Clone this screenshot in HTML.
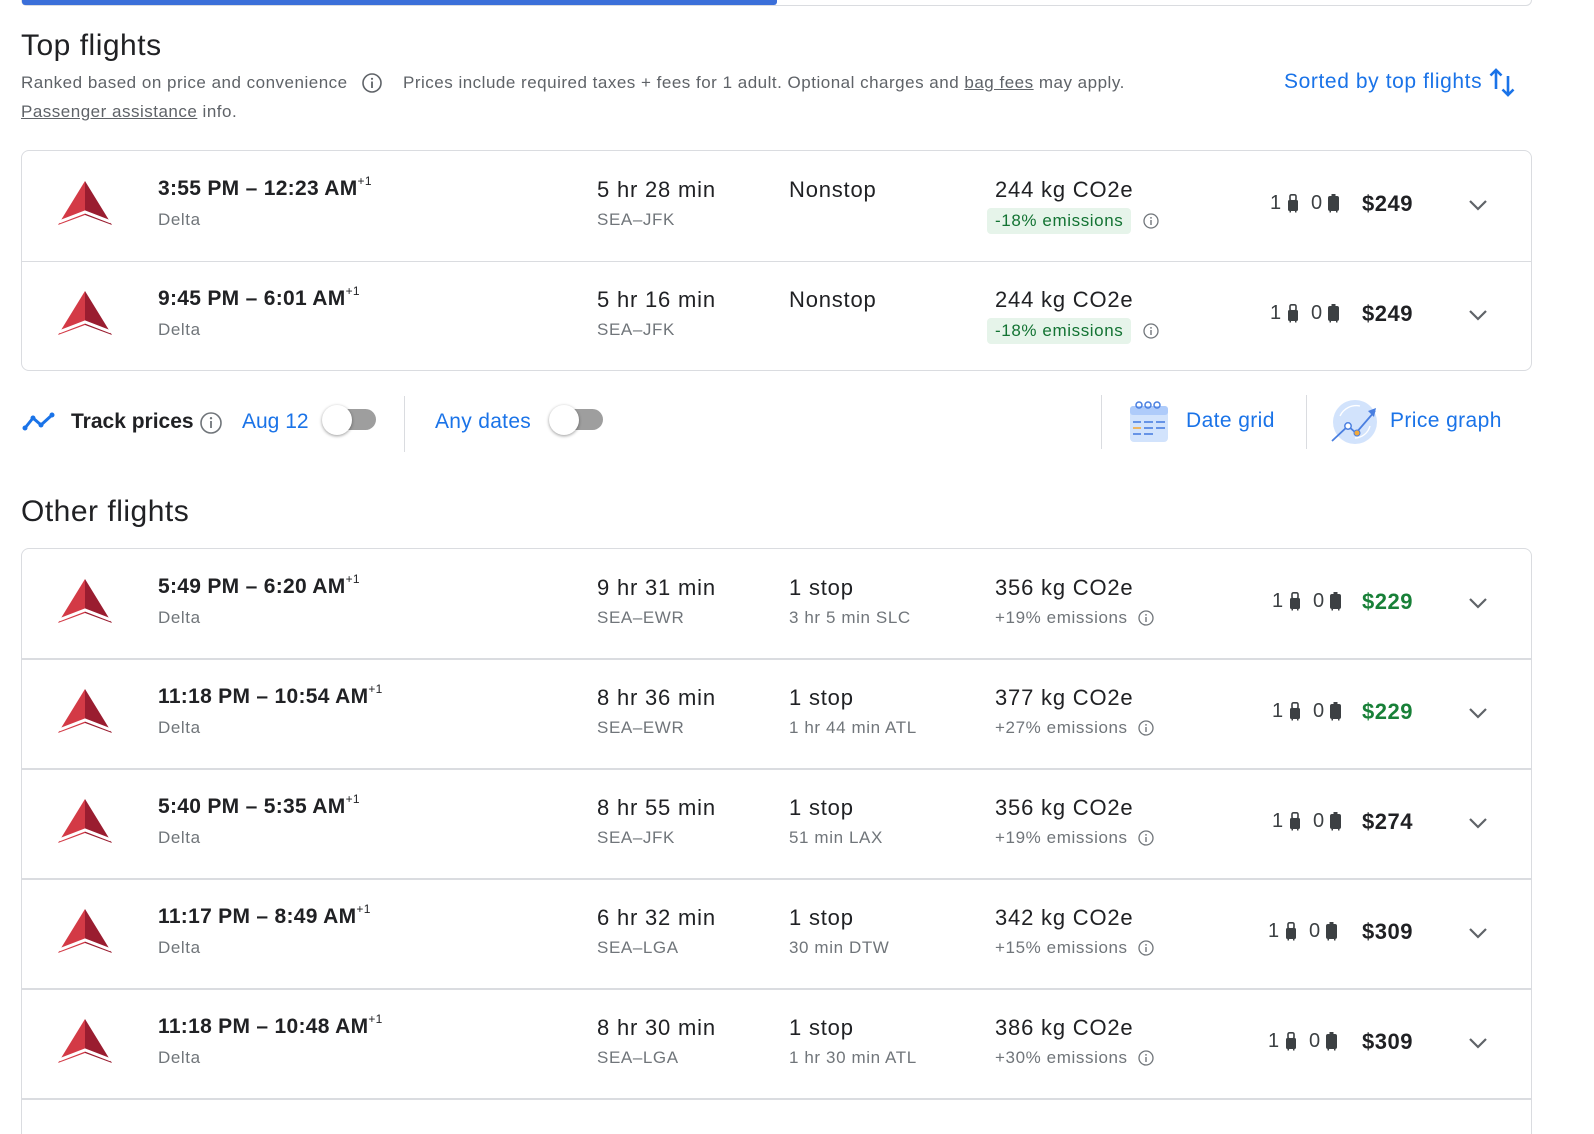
<!DOCTYPE html>
<html style="overflow:hidden;height:1134px"><head><meta charset="utf-8">
<style>
*{margin:0;padding:0;box-sizing:border-box}
html,body{width:1594px;height:1134px;overflow:hidden}
body{background:#fff;font-family:"Liberation Sans",Arial,sans-serif;color:#202124}
#w{position:relative;width:1594px;height:1134px;overflow:hidden}
.a{position:absolute;white-space:nowrap}
.card{position:absolute;left:21px;width:1511px;border:1px solid #dadce0;border-radius:8px;overflow:hidden}
.row{position:absolute;left:0;width:1509px;height:110px}
.sep{position:absolute;left:0;width:1509px;height:1px;background:#dadce0}
.sep2{position:absolute;left:0;width:1509px;height:2px;background:#dadce0}
.t{font-size:21px;font-weight:bold;color:#202124;top:26px;letter-spacing:.3px}
.t sup{font-size:12px;position:relative;top:-3px;vertical-align:top;font-weight:normal}
.s{font-size:17px;color:#70757a;top:59px;letter-spacing:.6px}
.m{font-size:22px;color:#202124;top:26px;letter-spacing:.8px}
.badge{top:57px;left:965px;height:26px;padding:0 8px;background:#e6f4ea;border-radius:4px;color:#137333;font-size:17px;line-height:26px;letter-spacing:.6px}
.bag{font-size:20px;color:#3c4043;top:41px}
.price{font-size:22px;font-weight:bold;top:40px;text-align:right;width:120px;left:1271px;letter-spacing:.5px}
.g{color:#188038}
</style></head><body><div id="w">

<div class="a" style="left:21px;top:-6px;width:1511px;height:12px;border:1px solid #dadce0;border-radius:8px"></div>
<div class="a" style="left:22px;top:0;width:755px;height:5px;background:#3b6fd9;border-radius:0 0 3px 3px"></div>

<div class="a" style="left:21px;top:29px;font-size:30px;letter-spacing:.5px">Top flights</div>
<div class="a" style="left:21px;top:73px;font-size:17px;color:#5f6368;letter-spacing:.5px">Ranked based on price and convenience</div>
<svg class="a" style="left:361px;top:72px" width="22" height="22" viewBox="0 0 22 22"><circle cx="11" cy="11" r="9" fill="none" stroke="#5f6368" stroke-width="1.6"/><rect x="10.1" y="9.5" width="1.8" height="6.5" fill="#5f6368"/><circle cx="11" cy="6.8" r="1.1" fill="#5f6368"/></svg>
<div class="a" style="left:403px;top:73px;font-size:17px;color:#5f6368;letter-spacing:.5px">Prices include required taxes + fees for 1 adult. Optional charges and <u>bag fees</u> may apply.</div>
<div class="a" style="left:21px;top:102px;font-size:17px;color:#5f6368;letter-spacing:.5px"><u>Passenger assistance</u> info.</div>
<div class="a" style="left:1284px;top:70px;font-size:21px;color:#1a73e8;letter-spacing:.6px">Sorted by top flights</div>
<svg class="a" style="left:1489px;top:67px" width="28" height="32" viewBox="0 0 28 32"><path d="M7 22V3M1.5 8.5L7 3l5.5 5.5" fill="none" stroke="#1a73e8" stroke-width="2.6"/><path d="M19 9v19M13.5 22.5L19 28l5.5-5.5" fill="none" stroke="#1a73e8" stroke-width="2.6"/></svg>

<svg width="0" height="0" style="position:absolute"><defs>
<g id="logo"><polygon points="27,0 0,44 27,34" fill="#d33a46"/><polygon points="27,0 54,44 27,34" fill="#9a1d30"/><polyline points="1,41 27,31 53,41" fill="none" stroke="#fff" stroke-width="3"/></g>
<g id="carry"><rect x="2" y="0.8" width="6" height="6" rx="1.5" fill="none" stroke="#3c4043" stroke-width="1.6"/><rect x="0" y="6" width="10" height="11" rx="1.5" fill="#3c4043"/><rect x="1.5" y="17" width="1.5" height="1.5" fill="#3c4043"/><rect x="7" y="17" width="1.5" height="1.5" fill="#3c4043"/></g>
<g id="check"><rect x="3.5" y="0" width="4" height="2.5" fill="#3c4043"/><rect x="0" y="2" width="11" height="15" rx="2" fill="#3c4043"/><rect x="1.5" y="17" width="1.5" height="1.5" fill="#3c4043"/><rect x="8" y="17" width="1.5" height="1.5" fill="#3c4043"/></g>
<g id="info"><circle cx="8" cy="8" r="7" fill="none" stroke="#70757a" stroke-width="1.3"/><rect x="7.3" y="7" width="1.4" height="5" fill="#70757a"/><circle cx="8" cy="4.9" r=".9" fill="#70757a"/></g>
<g id="chev"><polyline points="1,1 9,9 17,1" fill="none" stroke="#5f6368" stroke-width="2.2"/></g>
</defs></svg>

<div class="card" style="top:150px;height:221px">
 <div class="row" style="top:0">
  <svg class="a" style="left:36px;top:30px" width="54" height="44"><use href="#logo"/></svg>
  <div class="a t" style="left:136px">3:55 PM – 12:23 AM<sup>+1</sup></div>
  <div class="a s" style="left:136px">Delta</div>
  <div class="a m" style="left:575px">5 hr 28 min</div>
  <div class="a s" style="left:575px">SEA–JFK</div>
  <div class="a m" style="left:767px">Nonstop</div>
  <div class="a m" style="left:973px">244 kg CO2e</div>
  <div class="a badge">-18% emissions</div>
  <svg class="a" style="left:1121px;top:62px" width="16" height="16"><use href="#info"/></svg>
  <div class="a bag" style="left:1248px">1</div><svg class="a" style="left:1266px;top:43px" width="11" height="19"><use href="#carry"/></svg>
  <div class="a bag" style="left:1289px">0</div><svg class="a" style="left:1306px;top:43px" width="12" height="19"><use href="#check"/></svg>
  <div class="a price">$249</div>
  <svg class="a" style="left:1447px;top:49px" width="18" height="11"><use href="#chev"/></svg>
 </div>
 <div class="sep" style="top:110px"></div>
 <div class="row" style="top:110px">
  <svg class="a" style="left:36px;top:30px" width="54" height="44"><use href="#logo"/></svg>
  <div class="a t" style="left:136px">9:45 PM – 6:01 AM<sup>+1</sup></div>
  <div class="a s" style="left:136px">Delta</div>
  <div class="a m" style="left:575px">5 hr 16 min</div>
  <div class="a s" style="left:575px">SEA–JFK</div>
  <div class="a m" style="left:767px">Nonstop</div>
  <div class="a m" style="left:973px">244 kg CO2e</div>
  <div class="a badge">-18% emissions</div>
  <svg class="a" style="left:1121px;top:62px" width="16" height="16"><use href="#info"/></svg>
  <div class="a bag" style="left:1248px">1</div><svg class="a" style="left:1266px;top:43px" width="11" height="19"><use href="#carry"/></svg>
  <div class="a bag" style="left:1289px">0</div><svg class="a" style="left:1306px;top:43px" width="12" height="19"><use href="#check"/></svg>
  <div class="a price">$249</div>
  <svg class="a" style="left:1447px;top:49px" width="18" height="11"><use href="#chev"/></svg>
 </div>
</div>

<svg class="a" style="left:22px;top:412px" width="34" height="20" viewBox="0 0 34 20"><polyline points="3,16 11,6 19,13 30,3" fill="none" stroke="#1a73e8" stroke-width="3" stroke-linejoin="round"/><circle cx="3" cy="16" r="2.5" fill="#1a73e8"/><circle cx="11" cy="6" r="2.5" fill="#1a73e8"/><circle cx="19" cy="13" r="2.5" fill="#1a73e8"/><circle cx="30" cy="3" r="2.5" fill="#1a73e8"/></svg>
<div class="a" style="left:71px;top:410px;font-size:21px;font-weight:bold">Track prices</div>
<svg class="a" style="left:199px;top:411px" width="24" height="24" viewBox="0 0 24 24"><circle cx="12" cy="12" r="10" fill="none" stroke="#70757a" stroke-width="1.6"/><rect x="11.1" y="10" width="1.8" height="7" fill="#70757a"/><circle cx="12" cy="7.2" r="1.2" fill="#70757a"/></svg>
<div class="a" style="left:242px;top:410px;font-size:21px;color:#1a73e8">Aug 12</div>
<div class="a" style="left:334px;top:409px;width:42px;height:21px;border-radius:11px;background:#9e9e9e"></div>
<div class="a" style="left:322px;top:405px;width:30px;height:30px;border-radius:50%;background:#fff;box-shadow:0 1px 3px rgba(0,0,0,.4)"></div>
<div class="a" style="left:404px;top:396px;width:1px;height:56px;background:#dadce0"></div>
<div class="a" style="left:435px;top:410px;font-size:21px;color:#1a73e8;letter-spacing:.3px">Any dates</div>
<div class="a" style="left:561px;top:409px;width:42px;height:21px;border-radius:11px;background:#9e9e9e"></div>
<div class="a" style="left:549px;top:405px;width:30px;height:30px;border-radius:50%;background:#fff;box-shadow:0 1px 3px rgba(0,0,0,.4)"></div>

<div class="a" style="left:1101px;top:395px;width:1px;height:54px;background:#dadce0"></div>
<svg class="a" style="left:1128px;top:400px" width="44" height="44" viewBox="0 0 44 44"><rect x="2" y="6" width="38" height="36" rx="4" fill="#d2e3fc"/><rect x="2" y="6" width="38" height="9" rx="3" fill="#aecbfa"/><circle cx="11" cy="5" r="3" fill="none" stroke="#4a7fe0" stroke-width="1.5"/><circle cx="20" cy="5" r="3" fill="none" stroke="#4a7fe0" stroke-width="1.5"/><circle cx="29" cy="5" r="3" fill="none" stroke="#4a7fe0" stroke-width="1.5"/><g stroke-width="1.6"><line x1="5" y1="22" x2="13" y2="22" stroke="#4a7fe0"/><line x1="16" y1="22" x2="25" y2="22" stroke="#4a7fe0"/><line x1="28" y1="22" x2="37" y2="22" stroke="#4a7fe0"/><line x1="5" y1="28" x2="13" y2="28" stroke="#f2a93b"/><line x1="16" y1="28" x2="25" y2="28" stroke="#4a7fe0"/><line x1="28" y1="28" x2="37" y2="28" stroke="#4a7fe0"/><line x1="5" y1="34" x2="13" y2="34" stroke="#4a7fe0"/><line x1="16" y1="34" x2="25" y2="34" stroke="#4a7fe0"/></g></svg>
<div class="a" style="left:1186px;top:409px;font-size:21px;color:#1a73e8;letter-spacing:.4px">Date grid</div>
<div class="a" style="left:1306px;top:395px;width:1px;height:54px;background:#dadce0"></div>
<svg class="a" style="left:1330px;top:398px" width="50" height="48" viewBox="0 0 50 48"><circle cx="25" cy="24" r="22" fill="#d2e3fc"/><path d="M10 18a18 18 0 0 1 20-10" fill="none" stroke="#fff" stroke-width="1.4"/><path d="M40 28a16 16 0 0 1-15 12" fill="none" stroke="#fff" stroke-width="1.4"/><polyline points="2,43 18,28 26,35 45,13" fill="none" stroke="#4a7fe0" stroke-width="1.8"/><polygon points="46,10 38,13 44,19" fill="#4a7fe0"/><circle cx="18" cy="28" r="3.2" fill="#fff" stroke="#4a7fe0" stroke-width="1.5"/><circle cx="27" cy="35" r="3" fill="#f2a93b" stroke="#4a7fe0" stroke-width="1"/></svg>
<div class="a" style="left:1390px;top:409px;font-size:21px;color:#1a73e8;letter-spacing:.4px">Price graph</div>

<div class="a" style="left:21px;top:495px;font-size:30px;letter-spacing:.5px">Other flights</div>

<div class="card" style="top:548px;height:620px">
 <div class="row" style="top:0">
  <svg class="a" style="left:36px;top:30px" width="54" height="44"><use href="#logo"/></svg>
  <div class="a t" style="left:136px">5:49 PM – 6:20 AM<sup>+1</sup></div>
  <div class="a s" style="left:136px">Delta</div>
  <div class="a m" style="left:575px">9 hr 31 min</div>
  <div class="a s" style="left:575px">SEA–EWR</div>
  <div class="a m" style="left:767px">1 stop</div>
  <div class="a s" style="left:767px">3 hr 5 min SLC</div>
  <div class="a m" style="left:973px">356 kg CO2e</div>
  <div class="a s" style="left:973px">+19% emissions</div>
  <svg class="a" style="left:1116px;top:61px" width="16" height="16"><use href="#info"/></svg>
  <div class="a bag" style="left:1250px">1</div><svg class="a" style="left:1268px;top:43px" width="11" height="19"><use href="#carry"/></svg>
  <div class="a bag" style="left:1291px">0</div><svg class="a" style="left:1308px;top:43px" width="12" height="19"><use href="#check"/></svg>
  <div class="a price g">$229</div>
  <svg class="a" style="left:1447px;top:49px" width="18" height="11"><use href="#chev"/></svg>
 </div>
 <div class="sep2" style="top:109px"></div>
 <div class="row" style="top:110px">
  <svg class="a" style="left:36px;top:30px" width="54" height="44"><use href="#logo"/></svg>
  <div class="a t" style="left:136px">11:18 PM – 10:54 AM<sup>+1</sup></div>
  <div class="a s" style="left:136px">Delta</div>
  <div class="a m" style="left:575px">8 hr 36 min</div>
  <div class="a s" style="left:575px">SEA–EWR</div>
  <div class="a m" style="left:767px">1 stop</div>
  <div class="a s" style="left:767px">1 hr 44 min ATL</div>
  <div class="a m" style="left:973px">377 kg CO2e</div>
  <div class="a s" style="left:973px">+27% emissions</div>
  <svg class="a" style="left:1116px;top:61px" width="16" height="16"><use href="#info"/></svg>
  <div class="a bag" style="left:1250px">1</div><svg class="a" style="left:1268px;top:43px" width="11" height="19"><use href="#carry"/></svg>
  <div class="a bag" style="left:1291px">0</div><svg class="a" style="left:1308px;top:43px" width="12" height="19"><use href="#check"/></svg>
  <div class="a price g">$229</div>
  <svg class="a" style="left:1447px;top:49px" width="18" height="11"><use href="#chev"/></svg>
 </div>
 <div class="sep2" style="top:219px"></div>
 <div class="row" style="top:220px">
  <svg class="a" style="left:36px;top:30px" width="54" height="44"><use href="#logo"/></svg>
  <div class="a t" style="left:136px">5:40 PM – 5:35 AM<sup>+1</sup></div>
  <div class="a s" style="left:136px">Delta</div>
  <div class="a m" style="left:575px">8 hr 55 min</div>
  <div class="a s" style="left:575px">SEA–JFK</div>
  <div class="a m" style="left:767px">1 stop</div>
  <div class="a s" style="left:767px">51 min LAX</div>
  <div class="a m" style="left:973px">356 kg CO2e</div>
  <div class="a s" style="left:973px">+19% emissions</div>
  <svg class="a" style="left:1116px;top:61px" width="16" height="16"><use href="#info"/></svg>
  <div class="a bag" style="left:1250px">1</div><svg class="a" style="left:1268px;top:43px" width="11" height="19"><use href="#carry"/></svg>
  <div class="a bag" style="left:1291px">0</div><svg class="a" style="left:1308px;top:43px" width="12" height="19"><use href="#check"/></svg>
  <div class="a price">$274</div>
  <svg class="a" style="left:1447px;top:49px" width="18" height="11"><use href="#chev"/></svg>
 </div>
 <div class="sep2" style="top:329px"></div>
 <div class="row" style="top:330px">
  <svg class="a" style="left:36px;top:30px" width="54" height="44"><use href="#logo"/></svg>
  <div class="a t" style="left:136px">11:17 PM – 8:49 AM<sup>+1</sup></div>
  <div class="a s" style="left:136px">Delta</div>
  <div class="a m" style="left:575px">6 hr 32 min</div>
  <div class="a s" style="left:575px">SEA–LGA</div>
  <div class="a m" style="left:767px">1 stop</div>
  <div class="a s" style="left:767px">30 min DTW</div>
  <div class="a m" style="left:973px">342 kg CO2e</div>
  <div class="a s" style="left:973px">+15% emissions</div>
  <svg class="a" style="left:1116px;top:61px" width="16" height="16"><use href="#info"/></svg>
  <div class="a bag" style="left:1246px">1</div><svg class="a" style="left:1264px;top:43px" width="11" height="19"><use href="#carry"/></svg>
  <div class="a bag" style="left:1287px">0</div><svg class="a" style="left:1304px;top:43px" width="12" height="19"><use href="#check"/></svg>
  <div class="a price">$309</div>
  <svg class="a" style="left:1447px;top:49px" width="18" height="11"><use href="#chev"/></svg>
 </div>
 <div class="sep2" style="top:439px"></div>
 <div class="row" style="top:440px">
  <svg class="a" style="left:36px;top:30px" width="54" height="44"><use href="#logo"/></svg>
  <div class="a t" style="left:136px">11:18 PM – 10:48 AM<sup>+1</sup></div>
  <div class="a s" style="left:136px">Delta</div>
  <div class="a m" style="left:575px">8 hr 30 min</div>
  <div class="a s" style="left:575px">SEA–LGA</div>
  <div class="a m" style="left:767px">1 stop</div>
  <div class="a s" style="left:767px">1 hr 30 min ATL</div>
  <div class="a m" style="left:973px">386 kg CO2e</div>
  <div class="a s" style="left:973px">+30% emissions</div>
  <svg class="a" style="left:1116px;top:61px" width="16" height="16"><use href="#info"/></svg>
  <div class="a bag" style="left:1246px">1</div><svg class="a" style="left:1264px;top:43px" width="11" height="19"><use href="#carry"/></svg>
  <div class="a bag" style="left:1287px">0</div><svg class="a" style="left:1304px;top:43px" width="12" height="19"><use href="#check"/></svg>
  <div class="a price">$309</div>
  <svg class="a" style="left:1447px;top:49px" width="18" height="11"><use href="#chev"/></svg>
 </div>
 <div class="sep2" style="top:549px"></div>
</div>

</div></body></html>
